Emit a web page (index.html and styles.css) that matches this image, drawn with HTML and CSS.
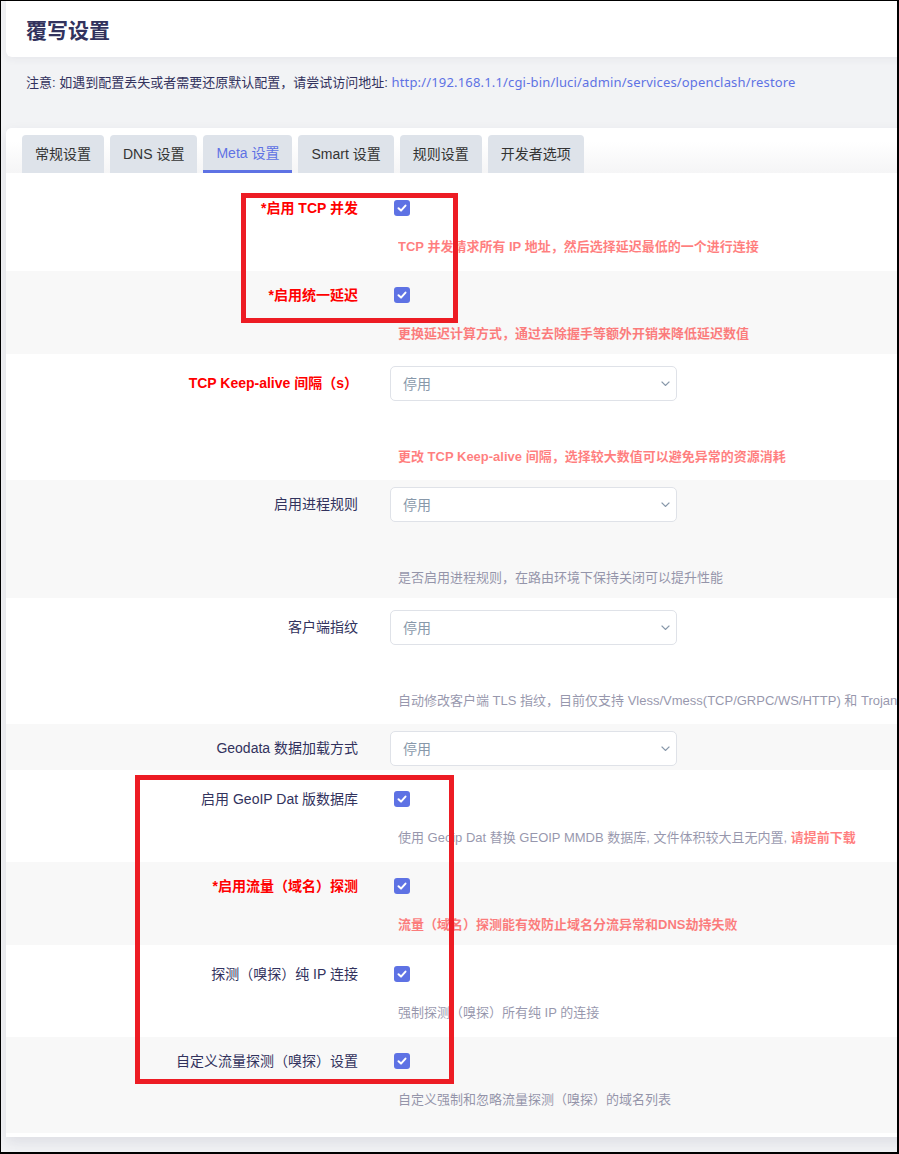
FILE: index.html
```html
<!DOCTYPE html>
<html lang="zh-CN">
<head>
<meta charset="utf-8">
<title>覆写设置</title>
<link rel="stylesheet" href="styles.css">
</head>
<body>
<div class="frame">
  <div class="page">
    <header class="title-card"><h2 class="title">覆写设置</h2></header>
    <p class="notice">注意: 如遇到配置丢失或者需要还原默认配置，请尝试访问地址: <a class="link" href="#">http://192.168.1.1/cgi-bin/luci/admin/services/openclash/restore</a></p>
    <section class="card">
      <div class="tabbar">
        <ul class="tabs">
          <li class="tab">常规设置</li>
          <li class="tab">DNS 设置</li>
          <li class="tab active">Meta 设置</li>
          <li class="tab">Smart 设置</li>
          <li class="tab">规则设置</li>
          <li class="tab">开发者选项</li>
        </ul>
      </div>
      <div class="rows">
        <div class="row">
          <label class="label req">*启用 TCP 并发</label>
          <div class="control"><span class="cb"><svg width="16" height="16" viewBox="0 0 16 16"><rect width="16" height="16" rx="3" fill="#5e72e4"/><path d="M4.5 8.3 L7 10.6 L11.5 5.6" fill="none" stroke="#fff" stroke-width="2" stroke-linecap="round" stroke-linejoin="round"/></svg></span></div>
          <div class="desc"><b class="warn">TCP 并发请求所有 IP 地址，然后选择延迟最低的一个进行连接</b></div>
        </div>
        <div class="row">
          <label class="label req">*启用统一延迟</label>
          <div class="control"><span class="cb"><svg width="16" height="16" viewBox="0 0 16 16"><rect width="16" height="16" rx="3" fill="#5e72e4"/><path d="M4.5 8.3 L7 10.6 L11.5 5.6" fill="none" stroke="#fff" stroke-width="2" stroke-linecap="round" stroke-linejoin="round"/></svg></span></div>
          <div class="desc"><b class="warn">更换延迟计算方式，通过去除握手等额外开销来降低延迟数值</b></div>
        </div>
        <div class="row row--select">
          <label class="label req">TCP Keep-alive 间隔（s）</label>
          <div class="control"><div class="select"><span>停用</span><svg width="9" height="5" viewBox="0 0 9 5"><path d="M0.6 0.6 L4.5 4.4 L8.4 0.6" fill="none" stroke="#8898aa" stroke-width="1.3"/></svg></div></div>
          <div class="desc"><b class="warn">更改 TCP Keep-alive 间隔，选择较大数值可以避免异常的资源消耗</b></div>
        </div>
        <div class="row row--select">
          <label class="label">启用进程规则</label>
          <div class="control"><div class="select"><span>停用</span><svg width="9" height="5" viewBox="0 0 9 5"><path d="M0.6 0.6 L4.5 4.4 L8.4 0.6" fill="none" stroke="#8898aa" stroke-width="1.3"/></svg></div></div>
          <div class="desc">是否启用进程规则，在路由环境下保持关闭可以提升性能</div>
        </div>
        <div class="row row--select">
          <label class="label">客户端指纹</label>
          <div class="control"><div class="select"><span>停用</span><svg width="9" height="5" viewBox="0 0 9 5"><path d="M0.6 0.6 L4.5 4.4 L8.4 0.6" fill="none" stroke="#8898aa" stroke-width="1.3"/></svg></div></div>
          <div class="desc">自动修改客户端 TLS 指纹，目前仅支持 Vless/Vmess(TCP/GRPC/WS/HTTP) 和 Trojan</div>
        </div>
        <div class="row row--select row--nodesc">
          <label class="label">Geodata 数据加载方式</label>
          <div class="control"><div class="select"><span>停用</span><svg width="9" height="5" viewBox="0 0 9 5"><path d="M0.6 0.6 L4.5 4.4 L8.4 0.6" fill="none" stroke="#8898aa" stroke-width="1.3"/></svg></div></div>
        </div>
        <div class="row">
          <label class="label">启用 GeoIP Dat 版数据库</label>
          <div class="control"><span class="cb"><svg width="16" height="16" viewBox="0 0 16 16"><rect width="16" height="16" rx="3" fill="#5e72e4"/><path d="M4.5 8.3 L7 10.6 L11.5 5.6" fill="none" stroke="#fff" stroke-width="2" stroke-linecap="round" stroke-linejoin="round"/></svg></span></div>
          <div class="desc">使用 Geoip Dat 替换 GEOIP MMDB 数据库, 文件体积较大且无内置, <b class="warn">请提前下载</b></div>
        </div>
        <div class="row">
          <label class="label req">*启用流量（域名）探测</label>
          <div class="control"><span class="cb"><svg width="16" height="16" viewBox="0 0 16 16"><rect width="16" height="16" rx="3" fill="#5e72e4"/><path d="M4.5 8.3 L7 10.6 L11.5 5.6" fill="none" stroke="#fff" stroke-width="2" stroke-linecap="round" stroke-linejoin="round"/></svg></span></div>
          <div class="desc"><b class="warn">流量（域名）探测能有效防止域名分流异常和DNS劫持失败</b></div>
        </div>
        <div class="row">
          <label class="label">探测（嗅探）纯 IP 连接</label>
          <div class="control"><span class="cb"><svg width="16" height="16" viewBox="0 0 16 16"><rect width="16" height="16" rx="3" fill="#5e72e4"/><path d="M4.5 8.3 L7 10.6 L11.5 5.6" fill="none" stroke="#fff" stroke-width="2" stroke-linecap="round" stroke-linejoin="round"/></svg></span></div>
          <div class="desc">强制探测（嗅探）所有纯 IP 的连接</div>
        </div>
        <div class="row">
          <label class="label">自定义流量探测（嗅探）设置</label>
          <div class="control"><span class="cb"><svg width="16" height="16" viewBox="0 0 16 16"><rect width="16" height="16" rx="3" fill="#5e72e4"/><path d="M4.5 8.3 L7 10.6 L11.5 5.6" fill="none" stroke="#fff" stroke-width="2" stroke-linecap="round" stroke-linejoin="round"/></svg></span></div>
          <div class="desc">自定义强制和忽略流量探测（嗅探）的域名列表</div>
        </div>
      </div>
    </section>
  </div>
  <div class="mark mark-1"></div>
  <div class="mark mark-2"></div>
</div>
</body>
</html>
```

FILE: styles.css
```css
html, body {
  margin: 0;
  padding: 0;
  background: #ffffff;
}

.frame {
  position: relative;
  width: 899px;
  height: 1154px;
  box-sizing: border-box;
  border-style: solid;
  border-color: #000;
  border-width: 1px 2px 2px 1px;
  overflow: hidden;
  background: #f2f3f5;
  font-family: "Liberation Sans", "Noto Sans CJK SC", sans-serif;
  color: #32325d;
}

.page {
  width: 1100px;
  padding-left: 5px;
}

.title-card {
  background: #fff;
  height: 56px;
  box-sizing: border-box;
  padding: 16px 20px 12px;
  border-radius: 0 0 6px 6px;
  box-shadow: 0 2px 8px rgba(50, 50, 93, 0.06);
}

.title {
  margin: 0;
  font-size: 21px;
  line-height: 28px;
  font-weight: 700;
  color: #32325d;
}

.notice {
  margin: 0;
  height: 18px;
  padding: 16px 20px 37px;
  font-size: 13px;
  line-height: 18px;
  color: #32325d;
  white-space: nowrap;
}

.link {
  font-family: "Noto Sans", "Liberation Sans", sans-serif;
  letter-spacing: 0.17px;
  color: #5e72e4;
  text-decoration: none;
}

.card {
  background: #fff;
  border-radius: 6px 6px 0 0;
  padding-bottom: 4px;
  box-shadow: 0 6px 14px rgba(50, 50, 93, 0.1);
}

.tabbar {
  padding: 7px 0 0 16px;
  border-radius: 6px 6px 0 0;
  background: linear-gradient(#ffffff 30%, #f5f5f6);
}

.tabs {
  display: flex;
  gap: 6px;
  margin: 0;
  padding: 0;
  list-style: none;
}

.tab {
  height: 38px;
  box-sizing: border-box;
  padding: 0 13px;
  line-height: 38px;
  font-size: 14px;
  color: #333;
  background: #dee3ea;
  border-radius: 4px 4px 0 0;
  white-space: nowrap;
}

.tab.active {
  color: #5e72e4;
  border-bottom: 3px solid #5e72e4;
  line-height: 37px;
}

.rows {
  padding-top: 6px;
  background: #fff;
}

.row {
  display: grid;
  grid-template-columns: 352px 1fr;
  column-gap: 32px;
  padding: 18px 0 14px;
  background: #fff;
}

.row:nth-child(even) {
  background: #f8f8f8;
  padding: 13px 0 10px;
}

.row--select:nth-child(odd) {
  padding-bottom: 13px;
}

.row--nodesc:nth-child(even) {
  padding-bottom: 11px;
}

.row:last-child {
  padding-bottom: 23px;
}

.label {
  grid-column: 1;
  grid-row: 1;
  align-self: center;
  text-align: right;
  font-size: 14px;
  line-height: 22px;
  white-space: nowrap;
  color: #32325d;
}

.label.req {
  color: #ff0000;
  font-weight: 700;
}

.control {
  grid-column: 2;
  grid-row: 1;
  height: 22px;
  display: flex;
  align-items: center;
}

.cb {
  display: flex;
  width: 16px;
  height: 16px;
  margin-left: 4px;
}

.select {
  flex: none;
  width: 287px;
  height: 35px;
  box-sizing: border-box;
  border: 1px solid #dfe2e8;
  border-radius: 5px;
  background: #fff;
  display: flex;
  align-items: center;
  justify-content: space-between;
  padding: 0 6px 0 12px;
  font-size: 14px;
  color: #8898aa;
}

.desc {
  grid-column: 2;
  grid-row: 2;
  margin-top: 18px;
  padding-left: 8px;
  font-size: 13px;
  line-height: 20px;
  white-space: nowrap;
  opacity: 0.5;
  color: #32325d;
}

.row--select .desc {
  margin-top: 53px;
}

.warn {
  color: #ff0000;
  font-weight: 700;
}

.mark {
  position: absolute;
  box-sizing: border-box;
  border: 5px solid #ed1c24;
  pointer-events: none;
}

.mark-1 {
  left: 240px;
  top: 192px;
  width: 217px;
  height: 130px;
}

.mark-2 {
  left: 134px;
  top: 774px;
  width: 319px;
  height: 309px;
}
```
